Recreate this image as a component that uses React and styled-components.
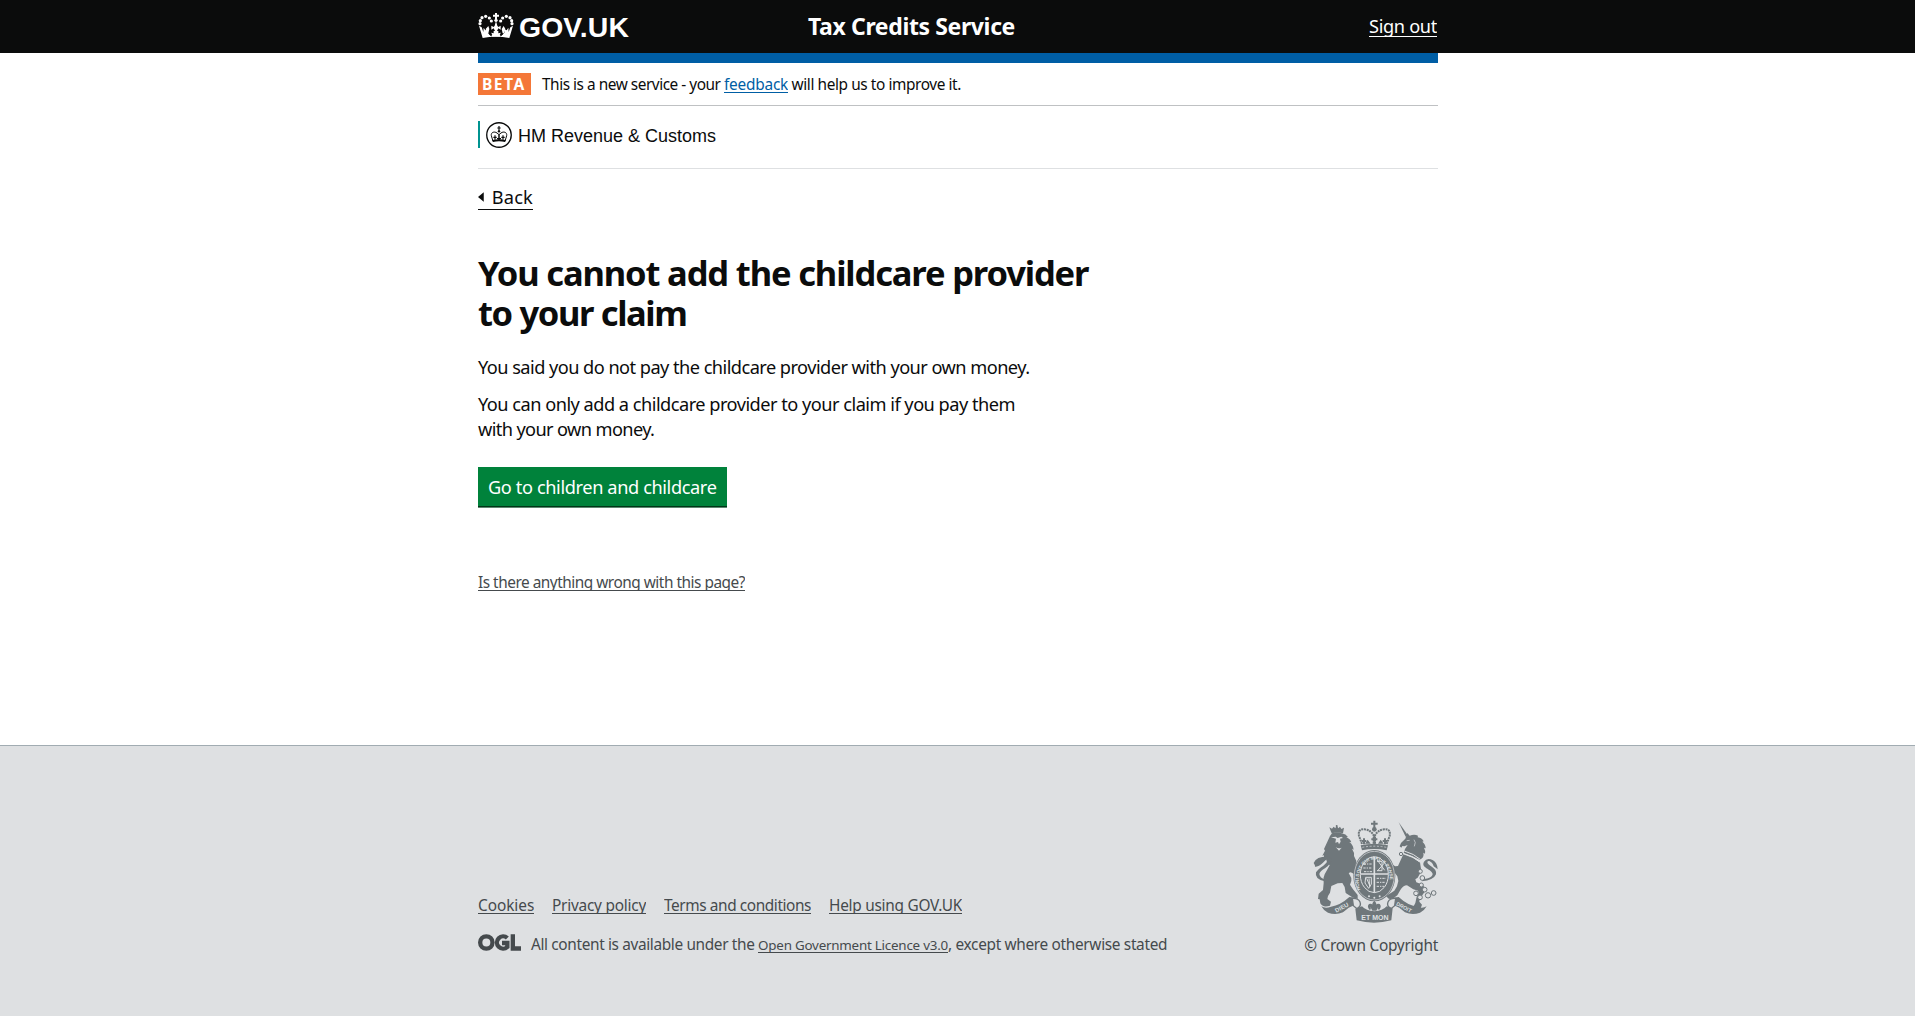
import React from 'react';
import styled, { createGlobalStyle, css } from 'styled-components';

const Global = createGlobalStyle`
  * { box-sizing: border-box; }
  body { margin: 0; background: #fff; color: #0b0c0c; font-family: "Noto Sans", "Open Sans", sans-serif; }
  h1, p { margin: 0; }
`;

const Page = styled.div`min-height: 1016px; display: flex; flex-direction: column;`;
const Container = styled.div`width: 960px; margin: 0 0 0 calc((100% - 959px) / 2);`;

const size19 = css`font-size: 18.2px; line-height: 25px;`;
const size16 = css`font-size: 15.4px; line-height: 21px;`;

const Text = styled.span`
  display: block;
  white-space: pre;
  ${p => (p.$large ? size19 : size16)}
  letter-spacing: ${p => p.$track || 0}px;
`;

const Link = styled.a`
  display: block;
  white-space: pre;
  overflow: hidden;
  cursor: pointer;
  ${p => (p.$large ? size19 : size16)}
  ${p => p.$small && css`font-size: 13.4px; line-height: 22px;`}
  box-sizing: content-box;
  height: ${p => p.$drop || 18}px;
  width: ${p => (p.$width ? `${p.$width}px` : 'auto')};
  letter-spacing: ${p => p.$track || 0}px;
  color: ${p => p.$color || '#454a4d'};
  border-bottom: 1px solid currentColor;
`;

const Header = styled.header`height: 53px; background: #0b0c0c; color: #fff;`;
const HeaderGrid = styled(Container)`
  display: grid;
  grid-template-columns: 330px 1fr auto;
  align-items: start;
`;
const Logo = styled.div`display: flex; align-items: flex-start; padding-top: 11px; gap: 5px;`;
const CrownMark = styled.svg`margin-top: 1px;`;
const LogoText = styled.span`font: bold 28.4px/32px "Liberation Sans", sans-serif; letter-spacing: 0.1px;`;
const ServiceName = styled.span`
  padding-top: 11px;
  font-weight: 700;
  font-size: 23px;
  line-height: 30px;
  letter-spacing: -0.37px;
`;
const SignOut = styled.div`padding: 14px 1px 0 0;`;
const BlueBar = styled(Container)`height: 10px; background: #005ea5;`;

const Phase = styled(Container)`
  display: flex;
  align-items: flex-start;
  height: 43px;
  padding-top: 10px;
  border-bottom: 1px solid #bfc1c3;
`;
const PhaseTag = styled.strong`
  width: 53px;
  height: 22px;
  margin-right: 11px;
  padding-left: 4px;
  background: #f47738;
  color: #fff;
  font-size: 15.6px;
  line-height: 22px;
  letter-spacing: 1.5px;
`;
const PhaseText = styled.div`display: flex; padding-top: 1px;`;

const Organisation = styled(Container)`
  height: 63px;
  padding-top: 15px;
  border-bottom: 1px solid #dee0e2;
`;
const OrganisationLogo = styled.div`
  display: flex;
  align-items: center;
  height: 27px;
  padding-left: 6px;
  border-left: 2px solid #009390;
  font: 18px/20px "Liberation Sans", sans-serif;
`;
const OrgName = styled.span`margin: 3px 0 0 6px;`;

const Main = styled(Container)`height: 576px; padding-top: 16px;`;
const Back = styled.a`
  display: flex;
  align-items: flex-start;
  width: 55px;
  height: 25px;
  border-bottom: 1px solid #0b0c0c;
`;
const Arrow = styled.svg`margin: 7px 8px 0 0;`;
const Heading = styled.h1`
  margin-top: 43px;
  font-weight: 700;
  font-size: 34.5px;
  line-height: 40px;
`;
const HeadingLine = styled.span`display: block; letter-spacing: ${p => p.$track}px;`;
const Paragraph = styled.p`margin-top: ${p => p.$gap}px;`;
const Button = styled.button`
  display: block;
  width: 249px;
  height: 41px;
  margin-top: 25px;
  padding: 7px 10px;
  border: 0;
  background: #00823b;
  box-shadow: inset 0 -1px 0 #5d8870, inset 0 -2px 0 #003618;
  color: #fff;
  font-family: inherit;
  text-align: left;
`;
const Report = styled.div`display: flex; margin-top: 64px;`;

const Footer = styled.footer`
  flex: 1;
  border-top: 1px solid #a1acb2;
  background: #dee0e2;
  color: #454a4d;
`;
const FooterRow = styled(Container)`display: flex; justify-content: space-between;`;
const FooterMeta = styled.div`padding-top: 149px;`;
const FooterLinks = styled.nav`display: flex; gap: 18px;`;
const Licence = styled.div`display: flex; align-items: flex-start; margin-top: 20px;`;
const Ogl = styled.svg`margin-right: 10px;`;
const Copyright = styled.div`
  display: flex;
  flex-direction: column;
  align-items: flex-end;
  padding-top: 74px;
`;
const CopyText = styled.div`margin-top: 11px;`;

const Crown = () => (
  <CrownMark width="36" height="28" viewBox="0 0 108 84" fill="#fff">
    <path d="M51 3h6v5h6v6h-6v8h-6v-8h-6V8h6z" />
    <circle cx="54" cy="25" r="5" />
    <path d="M54 27l4 14 3 4 7-4v12l-7-4-4 8h4v7l8-2-3 12H42l-3-12 8 2v-7h4l-4-8-7 4V41l7 4 3-4z" />
    <path d="M3 41l8 5 5 14 1-13 5 8 9-4-4 10 13 12h28l13-12-4-10 9 4 5-8 1 13 5-14 8-5-11 37Q54 70 14 78Z" />
    {[[34, 18], [23, 13], [12, 17], [7, 26], [6, 35], [40, 27], [74, 18], [85, 13], [96, 17], [101, 26], [102, 35], [68, 27]].map(([x, y]) => (
      <circle key={`${x}-${y}`} cx={x} cy={y} r="4.8" />
    ))}
    <path d="M31 42l3 9-3 13h-5l-3-13zM77 42l5 9-3 13h-5l-3-13z" />
    <g fill="#0b0c0c"><path d="M38 62l5 5-5 4-5-4zM70 62l5 5-5 4-5-4z" /></g>
  </CrownMark>
);

const Roundel = () => (
  <svg width="26" height="26" viewBox="0 0 78 78" fill="none" stroke="#0b0c0c">
    <circle cx="39" cy="39" r="36.8" strokeWidth="4" />
    <path d="M21 58L16 41c-2-10 9-14 17-8l6 5v17M57 58l5-17c2-10-9-14-17-8l-6 5v17" strokeWidth="3" />
    <path d="M39 12v18M34 18h10" strokeWidth="3.5" />
    <circle cx="39" cy="28" r="3.5" fill="#0b0c0c" stroke="none" />
    <path d="M20 57q19-5 38 0" strokeWidth="6" />
    <path d="M27 40v13M22 46h10M51 40v13M46 46h10M33 50h12" strokeWidth="3.5" />
  </svg>
);

const OglMark = () => (
  <Ogl width="43" height="17" viewBox="0 0 129 51" fill="none" stroke="#454a4d" strokeWidth="13">
    <circle cx="25" cy="25.5" r="18.5" />
    <path d="M88 12A18.5 18.5 0 1 0 88 39V27H72" />
    <path d="M104.5 1V43.5H129" />
  </Ogl>
);

const G = '#6f777b';
const BG = '#dee0e2';

const Crest = () => (
  <svg width="125" height="104" viewBox="54 31 375 312" fill={G}>
    {/* lion */}
    <path d="M106 61l-3-8 8 4 5-6 5 5 4-9 5 9 5-5 4 7 8-4-3 17q-17-5-34 0z" />
    <circle cx="125" cy="49" r="3" />
    <path d="M105 79l6-8q15-6 29 0 13 2 19 11l-5 1q12 5 15 15l-6-1q12 9 13 23l-5-3q8 12 6 22l7 15-2 12q10 10 15 19l1 14-12 4-7-9-12-6-6 2 8 15q2 11-4 20l9 14 14 17v12l-16-5-20-13-3-18-7-12-14 1-19 8-4 20-6 10-2 9 11 8-3 12q-22 7-29-7l-2-12-5-1 2-16 13-11 2-21q-3-15 3-26l15-27q-10-9-12-22l-5 4v-12l-5 1 8-15-3-5z" />
    <path d="M101 141Q66 139 56 160q7 12 3 12 14-1 24-12 9-9 13-12 4 9-11 20-17 11-22 20-5 21 27 27l2-5q-18-5-19-17 2-9 18-18 20-14 18-26-2-9-8-8z" />
    <path fill={BG} d="M108 83l14-2 6 4 11-4 5 4-9 2 2 9-5 8-3-7-8 2 2-12zM122 112q8 7 18 2l-8 9z" />

    {/* unicorn */}
    <path d="M311 38l27 38-6 5z" />
    <path d="M334 78l3-8 7 8q14-5 25 0l-1 5q13 2 18 12l-4 1q10 8 10 20l-5-2q5 9 3 18l-5-3q2 8-1 14l-9 8q-22-13-49-20l4-13 8-12-10 4-6-1-3 5-5-4 4-10 13-13z" />
    <path d="M325 134q27 8 50 24l3 20-2 12-8 14-7 5 3 9 16 6 9 9 2 10-8 12-9 12-1 9 8 9-4 11q-8 5-17 0l-5-5 6-11 4-19 6-12-2-6-14-4-19-12q-12 0-20 14l-9 16-16 12-10-2-8-8 10-6 15-10 8-13 4-16-3-14-10-14-13 3-10 10q-4 5-10 4l-3-10 5-5 7-1 3-8 12-6-9-9q-8 1-10 5l-6-3 2-9 9-4 9 2 9 10 9 5 8-1z" />
    <path d="M380 215Q416 212 423 194C428 174 396 168 397 157c3-8 16 1 19 13q7 5 12 9-1-20-14-27-18-9-27 4c-11 19 25 22 26 37-1 9-12 14-26 15z" />
    <g fill="none" stroke={BG} strokeWidth="3">
      <path d="M328 124q29 8 49 26M325 131q29 8 49 26" />
      <path d="M335 93l9-1M357 90q7 7 1 20" strokeWidth="2" />
    </g>
    <g fill={BG} stroke={G} strokeWidth="3">
      <circle cx="376" cy="185" r="6" /><circle cx="382" cy="205" r="7" /><circle cx="379" cy="226" r="6" />
      <circle cx="363" cy="251" r="7" /><circle cx="375" cy="263" r="7" /><circle cx="389" cy="240" r="7" />
      <circle cx="399" cy="257" r="8" /><circle cx="416" cy="250" r="7" /><circle cx="318" cy="133" r="5" />
    </g>

    {/* crown */}
    <g fill="none" stroke={G}>
      <path d="M201 103l-9-24q-4-23 17-20 22 4 27 19v24M275 103l9-24q4-23-17-20-22 4-27 19v24" strokeWidth="6" strokeDasharray="6 2" />
      <path d="M207 86v18M200 94h14M270 86v18M263 94h14M238 78v24M229 89h18" strokeWidth="6" />
      <path d="M238 33v23M228 42h20" strokeWidth="6" />
    </g>
    <circle cx="238" cy="59" r="7" />
    <path d="M197 107q41-9 82 0l-4 15q-37-8-74 0zM218 90l9 12h-17zM257 90l9 12h-17z" />
    <path d="M202 113q36-7 72 0" fill="none" stroke={BG} strokeWidth="2" strokeDasharray="6 5" />

    {/* shield and garter */}
    <ellipse cx="238" cy="198" rx="63" ry="77" />
    <ellipse cx="238" cy="198" rx="60" ry="73" fill="none" stroke={BG} strokeWidth="2" />
    <ellipse cx="238" cy="195" rx="42" ry="54" fill="none" stroke={BG} strokeWidth="3" />
    <path id="garter" d="M196 240A47 62 0 1 1 280 240" fill="none" />
    <text fill={BG} fontFamily="Liberation Sans, sans-serif" fontWeight="700" fontSize="14"><textPath href="#garter">HONI SOIT QUI MAL Y PENSE</textPath></text>
    <g fill="none" stroke={BG} strokeWidth="3">
      <path d="M238 142v107M197 193h82" strokeWidth="5" />
      <path d="M206 163h26M205 175h27M207 186h25M245 206h28M245 218h26M245 230h22" strokeDasharray="7 3 4 3" />
      <path d="M247 151l22 31M270 158l-22 25M246 155h15v28h-15M212 203h17v20l-8 13-11-16zM215 206l10 24M222 206l2 25" />
    </g>
    <g fill={BG}><circle cx="222" cy="260" r="3" /><circle cx="238" cy="264" r="3" /><circle cx="254" cy="260" r="3" /></g>

    {/* motto ribbon */}
    <path d="M79 290q12 8 29 1 28-4 55-29l19 2 2 20-23 10q-10 8-17 14-22 9-45 1-14-7-20-19zM395 290q-12 8-29 1-28-4-55-29l-19 2-2 20 23 10q10 8 17 14 22 9 45 1 14-7 20-19z" />
    <path d="M172 266q18-1 23 11 5 12-9 20l-11-9zM302 266q-18-1-23 11-5 12 9 20l11-9z" fill={BG} stroke={G} strokeWidth="4" />
    <path d="M181 297l20-7q12 14 37 15 25-1 37-15l18 6-4 36q-52 14-104 0z" />
    <path d="M238 273q10 9 4 19 1-13 12-9 7 7-1 17l-5-1 2-8-6 12h-12l-6-12 2 8-5 1q-8-10-1-17 11-4 12 9-6-10 4-19z" />
    <g fill={BG} fontFamily="Liberation Sans, sans-serif" fontWeight="700" fontSize="18">
      <text x="124" y="309" transform="rotate(-28 124 309)">DIEU</text>
      <text x="199" y="330" fontSize="21">ET MON</text>
      <text x="302" y="286" fontSize="16" transform="rotate(28 302 286)">DROIT</text>
    </g>
  </svg>
);

export default function App() {
  return (
    <Page>
      <Global />
      <Header>
        <HeaderGrid>
          <Logo><Crown /><LogoText>GOV.UK</LogoText></Logo>
          <ServiceName>Tax Credits Service</ServiceName>
          <SignOut><Link $large $drop={22} $width={68} $track={-0.34} $color="#fff">Sign out</Link></SignOut>
        </HeaderGrid>
      </Header>
      <BlueBar />
      <Phase>
        <PhaseTag>BETA</PhaseTag>
        <PhaseText>
          <Text $track={-0.47}>This is a new service - your </Text>
          <Link $width={64} $track={-0.22} $color="#005ea5">feedback</Link>
          <Text $track={-0.41}> will help us to improve it.</Text>
        </PhaseText>
      </Phase>
      <Organisation>
        <OrganisationLogo><Roundel /><OrgName>HM Revenue &amp; Customs</OrgName></OrganisationLogo>
      </Organisation>
      <Main>
        <Back>
          <Arrow width="6" height="10" viewBox="0 0 6 10"><path d="M6 0v10L0 5z" fill="#0b0c0c" /></Arrow>
          <Text $large $track={0.2}>Back</Text>
        </Back>
        <Heading>
          <HeadingLine $track={-1.14}>You cannot add the childcare provider</HeadingLine>
          <HeadingLine $track={-1.36}>to your claim</HeadingLine>
        </Heading>
        <Paragraph $gap={22}><Text $large $track={-0.54}>You said you do not pay the childcare provider with your own money.</Text></Paragraph>
        <Paragraph $gap={12}>
          <Text $large $track={-0.51}>You can only add a childcare provider to your claim if you pay them</Text>
          <Text $large $track={-0.62}>with your own money.</Text>
        </Paragraph>
        <Button><Text $large $track={-0.39}>Go to children and childcare</Text></Button>
        <Report><Link $width={267} $track={-0.49}>Is there anything wrong with this page?</Link></Report>
      </Main>
      <Footer>
        <FooterRow>
          <FooterMeta>
            <FooterLinks>
              <Link $width={56} $track={-0.05}>Cookies</Link>
              <Link $width={94} $track={-0.23}>Privacy policy</Link>
              <Link $width={147} $track={-0.41}>Terms and conditions</Link>
              <Link $width={133} $track={-0.26}>Help using GOV.UK</Link>
            </FooterLinks>
            <Licence>
              <OglMark />
              <Text $track={-0.36}>All content is available under the </Text>
              <Link $small $width={190} $track={-0.23}>Open Government Licence v3.0</Link>
              <Text $track={-0.33}>, except where otherwise stated</Text>
            </Licence>
          </FooterMeta>
          <Copyright>
            <Crest />
            <CopyText><Text $track={-0.26}>© Crown Copyright</Text></CopyText>
          </Copyright>
        </FooterRow>
      </Footer>
    </Page>
  );
}
